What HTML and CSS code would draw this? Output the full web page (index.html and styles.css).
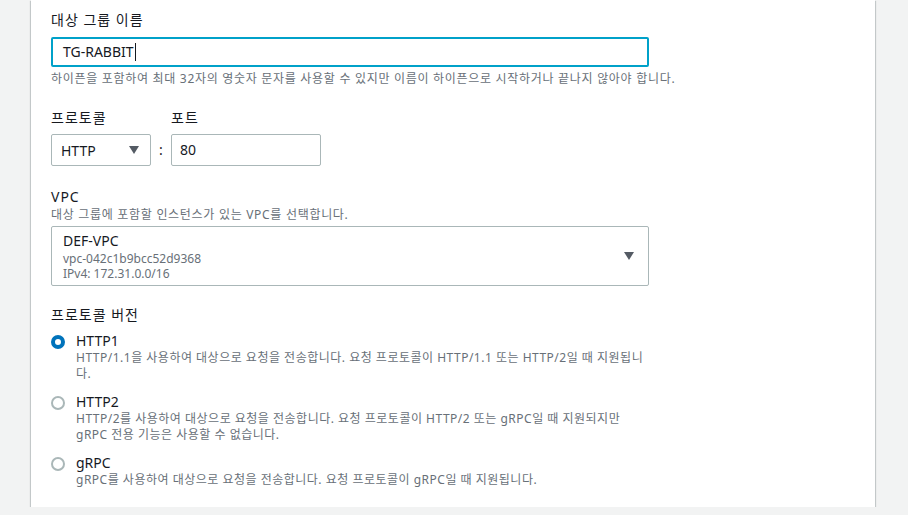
FILE: index.html
```html
<!DOCTYPE html>
<html lang="ko">
<head>
    <meta charset="UTF-8">
    <meta name="viewport" content="width=device-width, initial-scale=1.0">
    <title>대상 그룹 생성</title>
    <link rel="stylesheet" href="styles.css">
</head>
<body>
    <div class="panel">
        <div class="field">
            <label class="label">대상 그룹 이름</label>
            <div class="input focused">TG-RABBIT<span class="caret"></span></div>
            <div class="hint">하이픈을 포함하여 최대 32자의 영숫자 문자를 사용할 수 있지만 이름이 하이픈으로 시작하거나 끝나지 않아야 합니다.</div>
        </div>

        <div class="field row">
            <div class="col">
                <label class="label">프로토콜</label>
                <div class="select small">
                    <span>HTTP</span>
                    <svg class="arrow" width="10" height="8" viewBox="0 0 10 8"><path d="M0 0 H10 L5 8 Z" fill="#545b64"/></svg>
                </div>
            </div>
            <div class="colon">:</div>
            <div class="col">
                <label class="label">포트</label>
                <div class="input port">80</div>
            </div>
        </div>

        <div class="field vpc-field">
            <label class="label">VPC</label>
            <div class="hint top">대상 그룹에 포함할 인스턴스가 있는 VPC를 선택합니다.</div>
            <div class="select vpc">
                <div class="vpc-info">
                    <div class="vpc-name">DEF-VPC</div>
                    <div class="vpc-meta">vpc-042c1b9bcc52d9368</div>
                    <div class="vpc-meta">IPv4: 172.31.0.0/16</div>
                </div>
                <svg class="arrow" width="10" height="8" viewBox="0 0 10 8"><path d="M0 0 H10 L5 8 Z" fill="#545b64"/></svg>
            </div>
        </div>

        <div class="field last">
            <label class="label">프로토콜 버전</label>
            <div class="radios">
                <div class="radio">
                    <span class="dot checked"></span>
                    <div class="radio-text">
                        <div class="radio-label">HTTP1</div>
                        <div class="radio-desc">HTTP/1.1을 사용하여 대상으로 요청을 전송합니다. 요청 프로토콜이 HTTP/1.1 또는 HTTP/2일 때 지원됩니다.</div>
                    </div>
                </div>
                <div class="radio">
                    <span class="dot"></span>
                    <div class="radio-text">
                        <div class="radio-label">HTTP2</div>
                        <div class="radio-desc">HTTP/2를 사용하여 대상으로 요청을 전송합니다. 요청 프로토콜이 HTTP/2 또는 gRPC일 때 지원되지만 gRPC 전용 기능은 사용할 수 없습니다.</div>
                    </div>
                </div>
                <div class="radio">
                    <span class="dot"></span>
                    <div class="radio-text">
                        <div class="radio-label">gRPC</div>
                        <div class="radio-desc">gRPC를 사용하여 대상으로 요청을 전송합니다. 요청 프로토콜이 gRPC일 때 지원됩니다.</div>
                    </div>
                </div>
            </div>
        </div>
    </div>
</body>
</html>
```

FILE: styles.css
```css
body {
    margin: 0;
    padding: 0;
    background: #f2f3f3;
    font-family: "Noto Sans", "Noto Sans CJK KR", sans-serif;
    color: #16191f;
}

.panel {
    margin-left: 31px;
    width: 824px;
    background: #fff;
    padding: 10px 0 19px 20px;
    box-shadow: 0 1px 1px 0 rgba(0, 28, 36, 0.3), 1px 1px 1px 0 rgba(0, 28, 36, 0.15), -1px 1px 1px 0 rgba(0, 28, 36, 0.15);
}

.field {
    width: 598px;
    margin-bottom: 21px;
}

.field.vpc-field {
    margin-bottom: 19px;
}

.field.last {
    margin-bottom: 0;
}

.label {
    display: block;
    font-size: 14px;
    line-height: 20px;
    letter-spacing: 1px;
}

.hint {
    font-size: 12px;
    line-height: 16px;
    color: #687078;
    margin-top: 4px;
    white-space: nowrap;
    letter-spacing: 0.7px;
}

.hint.top {
    margin-top: 0;
}

.input {
    box-sizing: border-box;
    height: 30px;
    margin-top: 7px;
    border: 1px solid #aab7b8;
    border-radius: 2px;
    padding: 0 11px;
    font-size: 14px;
    line-height: 28px;
    display: flex;
    align-items: center;
}

.input.focused {
    border: 2px solid #00a1c9;
    padding: 0 10px;
    line-height: 26px;
}

.caret {
    display: inline-block;
    width: 1px;
    height: 18px;
    background: #16191f;
    margin-left: 1px;
}

.row {
    display: flex;
    align-items: flex-end;
}

.colon {
    width: 20px;
    text-align: center;
    font-size: 14px;
    line-height: 32px;
}

.select {
    box-sizing: border-box;
    border: 1px solid #aab7b8;
    border-radius: 2px;
    display: flex;
    align-items: center;
    justify-content: space-between;
    font-size: 14px;
}

.select.small {
    width: 100px;
    height: 32px;
    margin-top: 6px;
    padding: 0 11px 0 9px;
}

.input.port {
    width: 150px;
    height: 32px;
    margin-top: 6px;
    padding: 0 8px;
}

.select.vpc {
    margin-top: 3px;
    height: 60px;
    padding: 0 14px 0 11px;
}

.vpc-name {
    font-size: 14px;
    line-height: 20px;
}

.vpc-meta {
    font-size: 12px;
    line-height: 15px;
    color: #687078;
}

.radios {
    margin-top: 6px;
}

.radio {
    display: flex;
    margin-bottom: 10px;
}

.radio:last-child {
    margin-bottom: 0;
}

.dot {
    box-sizing: border-box;
    flex: none;
    width: 14px;
    height: 14px;
    border-radius: 50%;
    border: 2px solid #aab7b8;
    margin-top: 4px;
    margin-right: 11px;
}

.dot.checked {
    border: 4px solid #0073bb;
}

.radio-label {
    font-size: 14px;
    line-height: 20px;
}

.radio-desc {
    font-size: 12px;
    line-height: 16px;
    color: #687078;
    margin-top: -1px;
    width: 575px;
    letter-spacing: 0.5px;
}
```
